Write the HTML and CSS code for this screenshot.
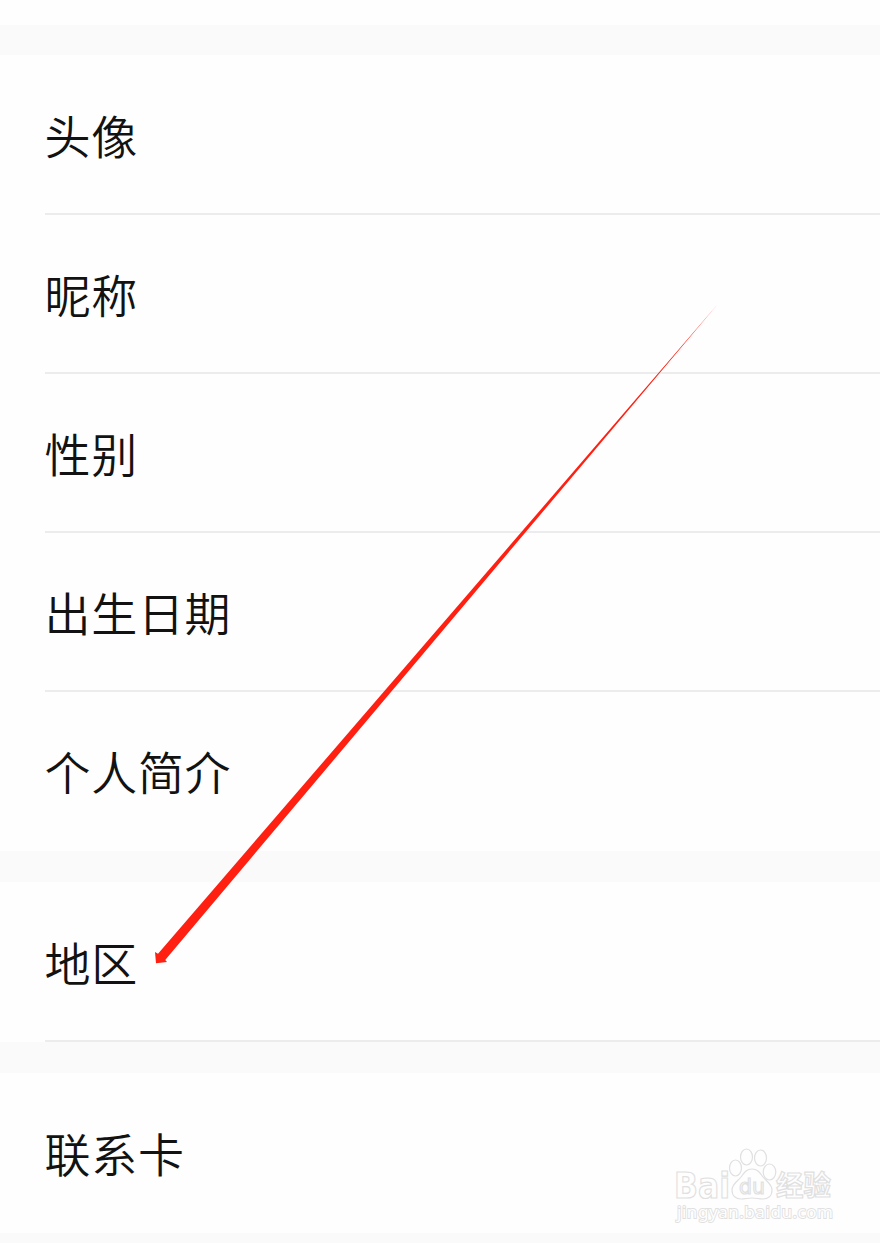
FILE: index.html
```
<!DOCTYPE html>
<html lang="zh-CN">
<head>
    <meta charset="UTF-8">
    <title>个人资料</title>
    <link rel="stylesheet" href="styles.css">
</head>
<body>
    <div class="page">
        <ul class="group">
            <li class="row">头像</li>
            <li class="row">昵称</li>
            <li class="row">性别</li>
            <li class="row">出生日期</li>
            <li class="row">个人简介</li>
        </ul>
        <ul class="group region">
            <li class="row">地区</li>
        </ul>
        <ul class="group">
            <li class="row">联系卡</li>
        </ul>

        <!-- Arrow pointing at the region row -->
        <svg class="arrow" width="880" height="1243" viewBox="0 0 880 1243">
            <path fill="#ff2012" d="M717 305 L165.2 960 L167 962 L156 963.3 L155 952 L158 953.7 Z"/>
        </svg>

        <svg class="watermark" width="180" height="90" viewBox="0 0 180 90">
            <g class="outline">
                <text class="brand" x="4" y="58" textLength="56" lengthAdjust="spacingAndGlyphs">Bai</text>
                <ellipse cx="65.5" cy="28" rx="6" ry="8"/>
                <ellipse cx="76.5" cy="17" rx="6" ry="8"/>
                <ellipse cx="90.5" cy="18" rx="6" ry="8"/>
                <ellipse cx="99.5" cy="32" rx="6.3" ry="8"/>
                <path d="M82 29c-6 0-8 4-11 8-3 4-9 7-9 13 0 6 4 9 9 9 4 0 7-1 11-1s7 1 11 1c5 0 9-3 9-9s-6-9-9-13c-3-4-5-8-11-8z"/>
                <text class="du" x="69" y="54" textLength="26" lengthAdjust="spacingAndGlyphs">du</text>
                <text class="jingyan" x="106" y="56" textLength="55" lengthAdjust="spacingAndGlyphs">经验</text>
                <text class="site" x="7" y="78" textLength="156">jingyan.baidu.com</text>
            </g>
        </svg>
    </div>
</body>
</html>
```
FILE: styles.css
```
* {
    box-sizing: border-box;
    margin: 0;
    padding: 0;
}

body {
    font-family: "Noto Sans CJK SC", sans-serif;
    background: #fafafa;
    color: #121212;
}

.page {
    position: relative;
    height: 1243px;
    overflow: hidden;
    border-top: 25px solid #fefefe;
    padding-top: 30px;
}

.group {
    list-style: none;
    background: #fefefe;
    padding-left: 45px;
    margin-bottom: 31px;
}

.row {
    height: 159px;
    font-size: 46px;
    font-weight: 350;
    line-height: 156px;
    letter-spacing: 0.7px;
    background: linear-gradient(#ececec, #ececec) 0 100% / 100% 2px no-repeat;
    text-indent: -0.5px;
}

.row:first-child {
    height: 160px;
    padding-top: 1px;
}

.group .row:last-child {
    background: none;
}

.region .row:last-child {
    background: linear-gradient(#ececec, #ececec) 0 100% / 100% 2px no-repeat;
}

.arrow {
    position: absolute;
    top: -25px;
    left: 0;
}

.watermark {
    position: absolute;
    left: 670px;
    top: 1115px;
}

.outline {
    fill: #fefefe;
    stroke: #e0e0e0;
    stroke-width: 1.2;
}

.brand {
    font: bold 36px "DejaVu Sans", sans-serif;
}

.du {
    font: 22px "DejaVu Sans", sans-serif;
}

.jingyan {
    font: bold 28px "Noto Sans CJK SC", sans-serif;
}

.site {
    font: 17px "Noto Sans", sans-serif;
    stroke-width: 1.8;
    paint-order: stroke;
}
```
